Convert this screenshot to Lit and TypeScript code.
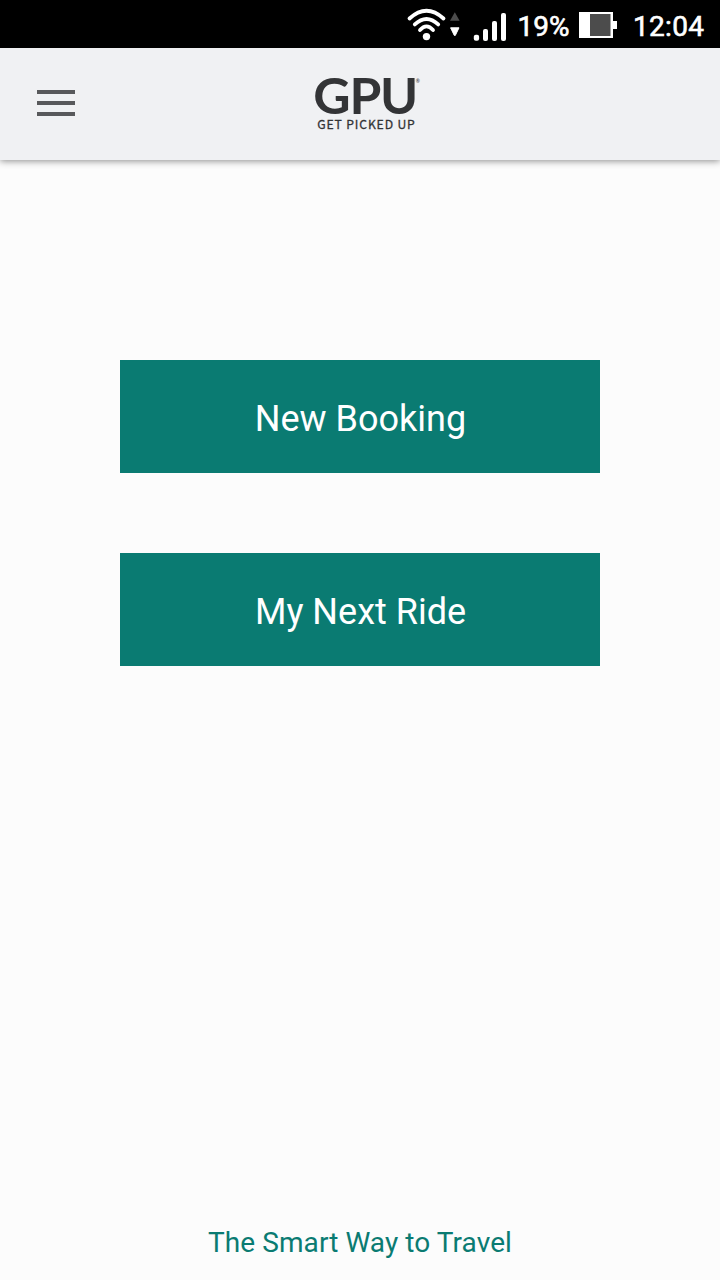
import { LitElement, html, css } from "lit";
import { customElement } from "lit/decorators.js";

@customElement("status-bar")
class StatusBar extends LitElement {
  static styles = css`
    :host { display: block; height: 48px; background: #000; color: #fff; }
    .bar { display: flex; justify-content: flex-end; height: 48px; }
    svg { display: block; }
    text { font: 400 28px Roboto, sans-serif; fill: #fff; stroke: #fff; stroke-width: 0.6px; }
  `;
  render() {
    return html`<div class="bar">
      <svg width="320" height="48" viewBox="400 0 320 48">
        <g fill="none" stroke="#fff" stroke-width="3.8" stroke-linecap="round">
          <path d="M409.5 18.5Q426.5 3 443.5 18.5" />
          <path d="M414.8 24.4Q426.5 13.4 438.2 24.4" />
          <path d="M420 30Q426.5 22.8 433 30" />
        </g>
        <circle cx="426.5" cy="36.6" r="3.7" fill="#fff" />
        <path d="M450 20.8L454.8 12.3L459.6 20.8Z" fill="#4c4c4c" />
        <path d="M450.6 27.8H459L455.3 35.4H454.3Z" fill="#fff" stroke="#fff" stroke-linejoin="round" />
        <g fill="#fff">
          <rect x="473.8" y="34.8" width="5.3" height="6" rx="2" />
          <rect x="483" y="29" width="5" height="12" rx="2" />
          <rect x="492" y="21" width="5" height="20" rx="2" />
          <rect x="501" y="13" width="5" height="28" rx="2" />
        </g>
        <text x="517.5" y="36" textLength="52">19%</text>
        <path d="M579 12H613V21H617V29H613V38H579Z" fill="#fff" />
        <rect x="590" y="14" width="20.5" height="22" fill="#4c4c4c" />
        <text x="633" y="36" textLength="71">12:04</text>
      </svg>
    </div>`;
  }
}

@customElement("app-header")
class AppHeader extends LitElement {
  static styles = css`
    :host { display: block; }
    .header {
      display: grid; grid-template-columns: 1fr 110px 1fr; align-items: start;
      height: 112px; background: #f0f1f3; box-shadow: 0 1px 7px rgba(0, 0, 0, 0.45);
    }
    .menu { display: grid; gap: 7px; width: 37.5px; margin: 42px 0 0 37.3px; padding: 0; border: 0; background: none; }
    .line { height: 4px; background: #58595b; }
    .logo { display: block; margin: 22px 0 0 5px; overflow: visible; }
    .letter { font: 700 49.5px Lato, sans-serif; fill: #333436; }
    .tagline { font: 400 12.2px "Noto Sans CJK SC", sans-serif; fill: #333436; stroke: #333436; stroke-width: 0.3px; }
    .mark { font: 700 5px Lato, sans-serif; fill: #58595b; }
  `;
  render() {
    return html`<header class="header">
      <button class="menu" aria-label="Menu">
        <span class="line"></span><span class="line"></span><span class="line"></span>
      </button>
      <svg class="logo" width="110" height="64" viewBox="310 70 110 64">
        <text class="letter" transform="translate(313.2 114.3) scale(1.04 1)" x="0 34.8 64.2">GPU</text>
        <text class="mark" x="415.7" y="82.5">®</text>
        <text class="tagline" x="317.3" y="129" textLength="97.5">GET PICKED UP</text>
      </svg>
    </header>`;
  }
}

@customElement("app-root")
class AppRoot extends LitElement {
  static styles = css`
    :host { display: block; font-family: Roboto, sans-serif; }
    .screen { display: flex; flex-direction: column; height: 1280px; background: #fcfcfc; }
    .actions { display: grid; gap: 80px; padding: 200px 120px 0; flex: 1; align-content: start; }
    .action {
      height: 113px; padding: 4px 0 0 1px; border: 0; background: #0a7b72; color: #fff;
      font: 400 36px Roboto, sans-serif;
    }
    .footer { height: 55px; line-height: 36px; font-size: 28px; letter-spacing: 0.08px; text-align: center; color: #0a7b72; }
  `;
  render() {
    return html`<div class="screen">
      <status-bar></status-bar>
      <app-header></app-header>
      <main class="actions">
        ${["New Booking", "My Next Ride"].map((label) => html`<button class="action">${label}</button>`)}
      </main>
      <footer class="footer">The Smart Way to Travel</footer>
    </div>`;
  }
}
